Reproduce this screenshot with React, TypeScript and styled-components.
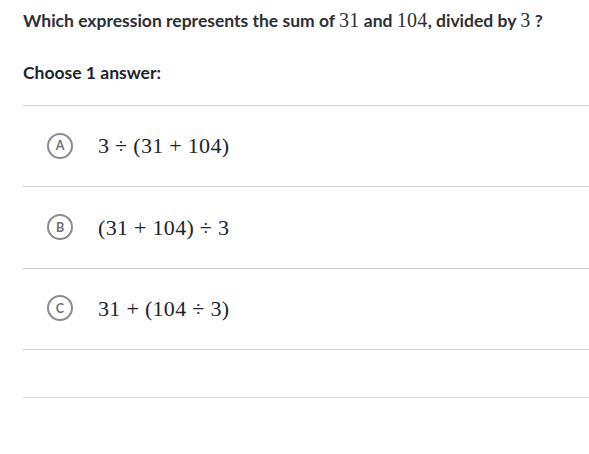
import * as React from 'react';
import styled, {createGlobalStyle} from 'styled-components';

const GlobalStyle = createGlobalStyle`
  html, body {
    margin: 0;
    padding: 0;
    background: #ffffff;
  }
  body {
    font-family: Lato, "Noto Sans", sans-serif;
    color: #21242c;
  }
`;

const Page = styled.div`
  padding: 9px 0 0 23px;
  overflow: hidden;
`;

const Question = styled.p`
  margin: 0;
  font-size: 17.5px;
  font-weight: 700;
  line-height: 22px;
  color: #2d2f34;
  white-space: nowrap;
`;

const MathInline = styled.span`
  font-family: "Liberation Serif", "DejaVu Serif", serif;
  font-weight: 400;
  font-size: 20px;
  letter-spacing: 0.3px;
`;

const Prompt = styled.div`
  margin-top: 30px;
  font-size: 17.5px;
  font-weight: 700;
  line-height: 22px;
  color: #21242c;
`;

const ChoiceList = styled.ul`
  list-style: none;
  margin: 21px 0 0;
  padding: 0;
  border-top: 1px solid #d0d0d2;
`;

const Choice = styled.li`
  display: flex;
  align-items: center;
  gap: 25px;
  height: 80.4px;
  padding-left: 24px;
  border-bottom: 1px solid #d0d0d2;
`;

const Letter = styled.span`
  display: flex;
  align-items: center;
  justify-content: center;
  flex: none;
  width: 26px;
  height: 26px;
  margin-top: -1px;
  box-sizing: border-box;
  border: 2px solid #8a8b8e;
  border-radius: 50%;
  font-size: 12.5px;
  font-weight: 700;
  color: #6f7074;
`;

const Expression = styled.span`
  font-family: "Liberation Serif", "DejaVu Serif", serif;
  font-size: 22px;
  letter-spacing: 0.3px;
  color: #21242c;
  white-space: pre;
`;

const Footer = styled.div`
  height: 47px;
  border-bottom: 1px solid #dcdcde;
`;

const choices = [
  {letter: 'A', text: '3 ÷ (31 + 104)'},
  {letter: 'B', text: '(31 + 104) ÷ 3'},
  {letter: 'C', text: '31 + (104 ÷ 3)'},
];

export default function App() {
  return (
    <Page>
      <GlobalStyle />
      <Question>
        Which expression represents the sum of <MathInline>31</MathInline> and{' '}
        <MathInline>104</MathInline>, divided by <MathInline>3</MathInline> ?
      </Question>
      <Prompt>Choose 1 answer:</Prompt>
      <ChoiceList>
        {choices.map((c) => (
          <Choice key={c.letter}>
            <Letter>{c.letter}</Letter>
            <Expression>{c.text}</Expression>
          </Choice>
        ))}
      </ChoiceList>
      <Footer />
    </Page>
  );
}
